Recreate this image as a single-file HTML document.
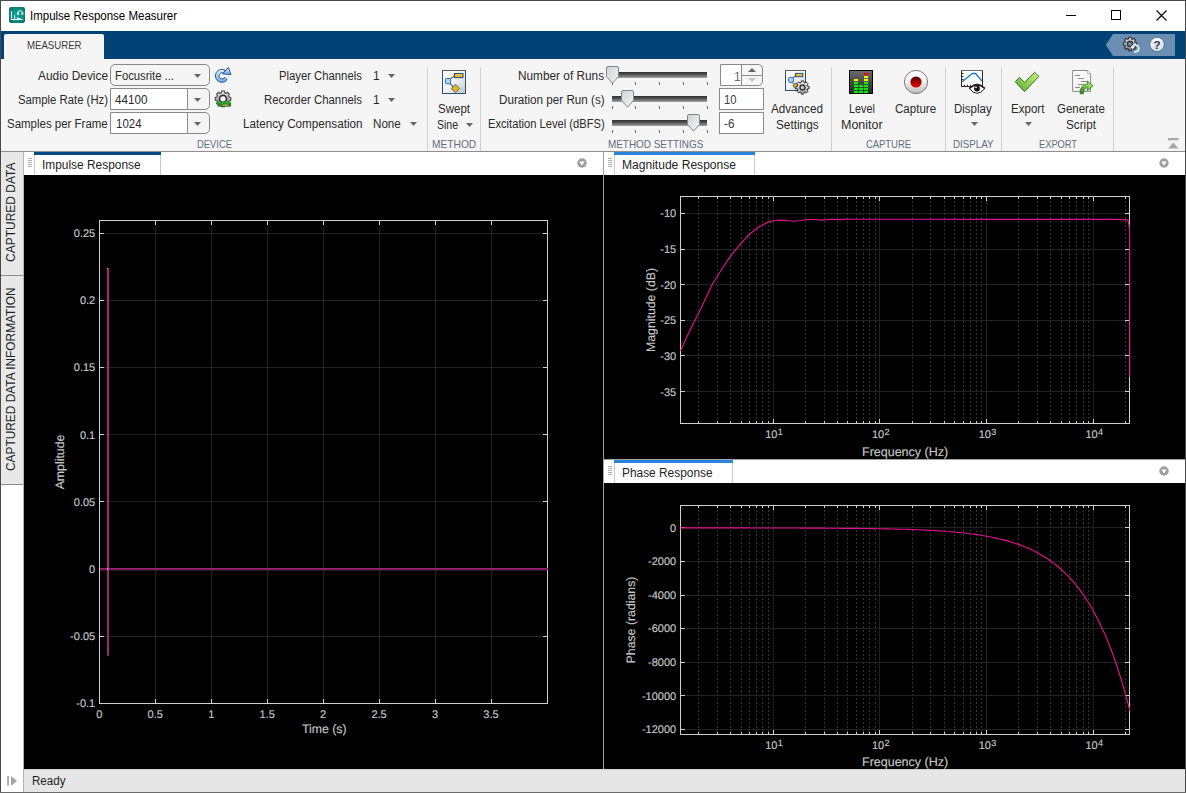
<!DOCTYPE html>
<html><head><meta charset="utf-8"><title>Impulse Response Measurer</title>
<style>
html,body{margin:0;padding:0;}
body{width:1186px;height:793px;position:relative;overflow:hidden;background:#fff;font-family:"Liberation Sans",sans-serif;}
.t{position:absolute;white-space:nowrap;line-height:1.117;transform-origin:0 0;display:block;}
svg{position:absolute;overflow:visible;}
</style></head><body>
<div style="position:absolute;left:0px;top:0px;width:1186px;height:793px;background:#fff;"></div>
<div style="position:absolute;left:0px;top:0px;width:1186px;height:1px;background:#4a4a4a;"></div>
<svg style="left:9px;top:7px" width="16" height="16" viewBox="0 0 16 16"><defs><radialGradient id="ig" cx="0.5" cy="0.5" r="0.75"><stop offset="0" stop-color="#0fa898"/><stop offset="0.6" stop-color="#0a8a7c"/><stop offset="1" stop-color="#04524c"/></radialGradient></defs><rect x="0" y="0" width="16" height="16" rx="2.2" fill="url(#ig)"/><path d="M2.5 4V12.5H14" fill="none" stroke="#f0fffb" stroke-width="1.1"/><path d="M5.6 8.2V12.5" stroke="#e0fff8" stroke-width="1"/><path d="M8 10.3L13.8 12.6H8Z" fill="#f0fffb"/><path d="M9 6.8V6A2.2 2.5 0 0 1 13.4 6V6.8" fill="none" stroke="#f0fffb" stroke-width="0.9"/><rect x="8.2" y="5.4" width="1.5" height="2.6" fill="#f0fffb"/><rect x="12.7" y="5.4" width="1.5" height="2.6" fill="#f0fffb"/></svg>
<span class="t " style="left:30.00px;top:10.14px;font-size:12px;color:#000;transform:scaleX(0.9583);">Impulse Response Measurer</span>
<div style="position:absolute;left:1066px;top:15px;width:10px;height:1px;background:#000;"></div>
<div style="position:absolute;left:1111px;top:10px;width:8px;height:8px;border:1px solid #000"></div>
<svg style="left:1156px;top:10px" width="11" height="11" viewBox="0 0 11 11"><path d="M0.5 0.5L10.5 10.5M10.5 0.5L0.5 10.5" stroke="#000" stroke-width="1.1" fill="none"/></svg>
<div style="position:absolute;left:1px;top:31px;width:1184px;height:28px;background:#004275;"></div>
<div style="position:absolute;left:4px;top:34px;width:100px;height:25px;background:#f5f5f5;border-radius:2px 2px 0 0"></div>
<span class="t " style="left:27.00px;top:39.05px;font-size:11px;color:#3a3a3a;transform:scaleX(0.8742);">MEASURER</span>
<svg style="left:1105px;top:34px" width="71" height="22" viewBox="0 0 71 22"><path d="M0.8 11L8 0H70V22H8Z" fill="#6a8fb2"/></svg>
<div style="position:absolute;left:1px;top:59px;width:1184px;height:92px;background:#f5f5f5;"></div>
<div style="position:absolute;left:1px;top:151px;width:1184px;height:1px;background:#8e8e8e;"></div>
<div style="position:absolute;left:427px;top:67px;width:1px;height:84px;background:#cfcfcf;"></div>
<div style="position:absolute;left:480px;top:67px;width:1px;height:84px;background:#cfcfcf;"></div>
<div style="position:absolute;left:831px;top:67px;width:1px;height:84px;background:#cfcfcf;"></div>
<div style="position:absolute;left:945px;top:67px;width:1px;height:84px;background:#cfcfcf;"></div>
<div style="position:absolute;left:1001px;top:67px;width:1px;height:84px;background:#cfcfcf;"></div>
<div style="position:absolute;left:1113px;top:67px;width:1px;height:84px;background:#cfcfcf;"></div>
<span class="t " style="left:38.00px;top:69.84px;font-size:12px;color:#2a2a2a;transform:scaleX(0.9901);">Audio Device</span>
<span class="t " style="left:17.70px;top:93.84px;font-size:12px;color:#2a2a2a;transform:scaleX(0.9438);">Sample Rate (Hz)</span>
<span class="t " style="left:7.30px;top:117.84px;font-size:12px;color:#2a2a2a;transform:scaleX(0.9557);">Samples per Frame</span>
<div style="position:absolute;left:110px;top:64px;width:98px;height:20px;border:1px solid #8a8a8a;border-radius:5px;background:#f5f5f5"></div>
<div style="position:absolute;left:110px;top:88px;width:98px;height:20px;border:1px solid #8a8a8a;border-radius:0 5px 5px 0;background:#f5f5f5"><div style="position:absolute;left:0;top:0;width:75.5px;height:20px;background:#fff;border-right:1px solid #8a8a8a"></div></div>
<div style="position:absolute;left:110px;top:112px;width:98px;height:20px;border:1px solid #8a8a8a;border-radius:0 5px 5px 0;background:#f5f5f5"><div style="position:absolute;left:0;top:0;width:75.5px;height:20px;background:#fff;border-right:1px solid #8a8a8a"></div></div>
<svg style="left:193.5px;top:74.3px" width="7" height="4" viewBox="0 0 7 4"><path d="M0 0H7L3.5 4Z" fill="#666"/></svg>
<svg style="left:193.5px;top:98.3px" width="7" height="4" viewBox="0 0 7 4"><path d="M0 0H7L3.5 4Z" fill="#666"/></svg>
<svg style="left:193.5px;top:122.3px" width="7" height="4" viewBox="0 0 7 4"><path d="M0 0H7L3.5 4Z" fill="#666"/></svg>
<span class="t " style="left:115.00px;top:69.84px;font-size:12px;color:#2a2a2a;transform:scaleX(0.9412);">Focusrite ...</span>
<span class="t " style="left:115.00px;top:93.84px;font-size:12px;color:#2a2a2a;transform:scaleX(0.9740);">44100</span>
<span class="t " style="left:115.50px;top:117.84px;font-size:12px;color:#2a2a2a;transform:scaleX(0.9553);">1024</span>
<span class="t " style="left:196.80px;top:138.04px;font-size:11px;color:#5f6e7c;transform:scaleX(0.8546);">DEVICE</span>
<span class="t " style="left:279.30px;top:69.84px;font-size:12px;color:#2a2a2a;transform:scaleX(0.9404);">Player Channels</span>
<span class="t " style="left:264.10px;top:93.84px;font-size:12px;color:#2a2a2a;transform:scaleX(0.9479);">Recorder Channels</span>
<span class="t " style="left:242.60px;top:117.84px;font-size:12px;color:#2a2a2a;transform:scaleX(0.9736);">Latency Compensation</span>
<span class="t " style="left:373.00px;top:69.84px;font-size:12px;color:#2a2a2a;">1</span>
<svg style="left:387.5px;top:74.3px" width="7" height="4" viewBox="0 0 7 4"><path d="M0 0H7L3.5 4Z" fill="#666"/></svg>
<span class="t " style="left:373.00px;top:93.84px;font-size:12px;color:#2a2a2a;">1</span>
<svg style="left:387.5px;top:98.3px" width="7" height="4" viewBox="0 0 7 4"><path d="M0 0H7L3.5 4Z" fill="#666"/></svg>
<span class="t " style="left:373.30px;top:117.84px;font-size:12px;color:#2a2a2a;transform:scaleX(0.9691);">None</span>
<svg style="left:409.5px;top:122.3px" width="7" height="4" viewBox="0 0 7 4"><path d="M0 0H7L3.5 4Z" fill="#666"/></svg>
<span class="t " style="left:437.80px;top:102.64px;font-size:12px;color:#2a2a2a;transform:scaleX(0.9595);">Swept</span>
<span class="t " style="left:436.90px;top:118.54px;font-size:12px;color:#2a2a2a;transform:scaleX(0.8785);">Sine</span>
<svg style="left:465.5px;top:123.4px" width="7" height="4" viewBox="0 0 7 4"><path d="M0 0H7L3.5 4Z" fill="#666"/></svg>
<span class="t " style="left:431.80px;top:138.04px;font-size:11px;color:#5f6e7c;transform:scaleX(0.9274);">METHOD</span>
<span class="t " style="left:518.20px;top:69.84px;font-size:12px;color:#2a2a2a;transform:scaleX(0.9855);">Number of Runs</span>
<span class="t " style="left:498.70px;top:93.84px;font-size:12px;color:#2a2a2a;transform:scaleX(0.9714);">Duration per Run (s)</span>
<span class="t " style="left:487.60px;top:117.84px;font-size:12px;color:#2a2a2a;transform:scaleX(0.9307);">Excitation Level (dBFS)</span>
<div style="position:absolute;left:612px;top:71.5px;width:95.3px;height:6.5px;background:linear-gradient(#2e2e2e,#555 45%,#a5a5a5)"></div>
<div style="position:absolute;left:612px;top:81.8px;width:1px;height:3.3px;background:#6a6a6a;"></div>
<div style="position:absolute;left:635px;top:81.8px;width:1px;height:3.3px;background:#6a6a6a;"></div>
<div style="position:absolute;left:659px;top:81.8px;width:1px;height:3.3px;background:#6a6a6a;"></div>
<div style="position:absolute;left:683px;top:81.8px;width:1px;height:3.3px;background:#6a6a6a;"></div>
<div style="position:absolute;left:707px;top:81.8px;width:1px;height:3.3px;background:#6a6a6a;"></div>
<svg style="left:606px;top:66.0px" width="13" height="18" viewBox="0 0 13 18"><defs><linearGradient id="tg71" x1="0" y1="0" x2="1" y2="1"><stop offset="0" stop-color="#cfd3d6"/><stop offset="1" stop-color="#f4f4f4"/></linearGradient></defs><path d="M2 0.5H11Q12.5 0.5 12.5 2V10.5L6.5 17.2L0.5 10.5V2Q0.5 0.5 2 0.5Z" fill="url(#tg71)" stroke="#7d8790" stroke-width="1"/></svg>
<div style="position:absolute;left:612px;top:95.5px;width:95.3px;height:6.5px;background:linear-gradient(#2e2e2e,#555 45%,#a5a5a5)"></div>
<div style="position:absolute;left:612px;top:105.8px;width:1px;height:3.3px;background:#6a6a6a;"></div>
<div style="position:absolute;left:635px;top:105.8px;width:1px;height:3.3px;background:#6a6a6a;"></div>
<div style="position:absolute;left:659px;top:105.8px;width:1px;height:3.3px;background:#6a6a6a;"></div>
<div style="position:absolute;left:683px;top:105.8px;width:1px;height:3.3px;background:#6a6a6a;"></div>
<div style="position:absolute;left:707px;top:105.8px;width:1px;height:3.3px;background:#6a6a6a;"></div>
<svg style="left:621px;top:90.0px" width="13" height="18" viewBox="0 0 13 18"><defs><linearGradient id="tg95" x1="0" y1="0" x2="1" y2="1"><stop offset="0" stop-color="#cfd3d6"/><stop offset="1" stop-color="#f4f4f4"/></linearGradient></defs><path d="M2 0.5H11Q12.5 0.5 12.5 2V10.5L6.5 17.2L0.5 10.5V2Q0.5 0.5 2 0.5Z" fill="url(#tg95)" stroke="#7d8790" stroke-width="1"/></svg>
<div style="position:absolute;left:612px;top:119.7px;width:95.3px;height:6.5px;background:linear-gradient(#2e2e2e,#555 45%,#a5a5a5)"></div>
<div style="position:absolute;left:612px;top:130.0px;width:1px;height:3.3px;background:#6a6a6a;"></div>
<div style="position:absolute;left:635px;top:130.0px;width:1px;height:3.3px;background:#6a6a6a;"></div>
<div style="position:absolute;left:659px;top:130.0px;width:1px;height:3.3px;background:#6a6a6a;"></div>
<div style="position:absolute;left:683px;top:130.0px;width:1px;height:3.3px;background:#6a6a6a;"></div>
<div style="position:absolute;left:707px;top:130.0px;width:1px;height:3.3px;background:#6a6a6a;"></div>
<svg style="left:687.3px;top:114.2px" width="13" height="18" viewBox="0 0 13 18"><defs><linearGradient id="tg119" x1="0" y1="0" x2="1" y2="1"><stop offset="0" stop-color="#cfd3d6"/><stop offset="1" stop-color="#f4f4f4"/></linearGradient></defs><path d="M2 0.5H11Q12.5 0.5 12.5 2V10.5L6.5 17.2L0.5 10.5V2Q0.5 0.5 2 0.5Z" fill="url(#tg119)" stroke="#7d8790" stroke-width="1"/></svg>
<div style="position:absolute;left:720px;top:64px;width:41px;height:20px;border:1px solid #8a8a8a;border-radius:0 5px 5px 0;background:#f5f5f5"><div style="position:absolute;left:0;top:0;width:20px;height:20px;background:#fff;border-right:1px solid #8a8a8a"></div><div style="position:absolute;left:21px;top:10px;width:20px;height:1px;background:#8a8a8a"></div></div>
<svg style="left:748px;top:68.3px" width="8" height="4" viewBox="0 0 8 4"><path d="M0 4H8L4 0Z" fill="#666"/></svg>
<svg style="left:748px;top:77.8px" width="8" height="4" viewBox="0 0 8 4"><path d="M0 0H8L4 4Z" fill="#c4c4c4"/></svg>
<span class="t " style="left:734.00px;top:71.14px;font-size:12px;color:#6a6a6a;">1</span>
<div style="position:absolute;left:719px;top:88px;width:43px;height:20px;border:1px solid #8a8a8a;background:#fff"></div>
<div style="position:absolute;left:719px;top:112px;width:43px;height:20px;border:1px solid #8a8a8a;background:#fff"></div>
<span class="t " style="left:724.00px;top:93.84px;font-size:12px;color:#3a3a3a;transform:scaleX(0.9365);">10</span>
<span class="t " style="left:724.00px;top:117.84px;font-size:12px;color:#3a3a3a;transform:scaleX(0.9747);">-6</span>
<span class="t " style="left:770.80px;top:102.64px;font-size:12px;color:#2a2a2a;transform:scaleX(0.9724);">Advanced</span>
<span class="t " style="left:775.60px;top:118.54px;font-size:12px;color:#2a2a2a;transform:scaleX(0.9825);">Settings</span>
<span class="t " style="left:608.20px;top:138.04px;font-size:11px;color:#5f6e7c;transform:scaleX(0.9014);">METHOD SETTINGS</span>
<span class="t " style="left:848.70px;top:102.64px;font-size:12px;color:#2a2a2a;transform:scaleX(0.8994);">Level</span>
<span class="t " style="left:840.80px;top:118.54px;font-size:12px;color:#2a2a2a;transform:scaleX(1.0421);">Monitor</span>
<span class="t " style="left:895.10px;top:102.64px;font-size:12px;color:#2a2a2a;transform:scaleX(0.9627);">Capture</span>
<span class="t " style="left:866.00px;top:138.04px;font-size:11px;color:#5f6e7c;transform:scaleX(0.8561);">CAPTURE</span>
<span class="t " style="left:954.20px;top:102.64px;font-size:12px;color:#2a2a2a;transform:scaleX(0.9582);">Display</span>
<svg style="left:970.5px;top:122.3px" width="7" height="4" viewBox="0 0 7 4"><path d="M0 0H7L3.5 4Z" fill="#666"/></svg>
<span class="t " style="left:953.30px;top:138.04px;font-size:11px;color:#5f6e7c;transform:scaleX(0.8872);">DISPLAY</span>
<span class="t " style="left:1010.60px;top:102.64px;font-size:12px;color:#2a2a2a;transform:scaleX(0.9630);">Export</span>
<svg style="left:1024.5px;top:122.3px" width="7" height="4" viewBox="0 0 7 4"><path d="M0 0H7L3.5 4Z" fill="#666"/></svg>
<span class="t " style="left:1057.20px;top:102.64px;font-size:12px;color:#2a2a2a;transform:scaleX(0.9554);">Generate</span>
<span class="t " style="left:1066.00px;top:118.54px;font-size:12px;color:#2a2a2a;transform:scaleX(0.9780);">Script</span>
<span class="t " style="left:1038.70px;top:138.04px;font-size:11px;color:#5f6e7c;transform:scaleX(0.8438);">EXPORT</span>
<svg style="left:1168px;top:137.5px" width="11" height="11" viewBox="0 0 11 11"><path d="M0 0H10.5V2.2H0ZM0 10.5H10.5L5.25 4.5Z" fill="#a8a8a8"/></svg>
<svg style="left:0;top:0" width="1186" height="160" viewBox="0 0 1186 160"><defs>
<linearGradient id="gBlue" x1="0" y1="0" x2="0" y2="1"><stop offset="0" stop-color="#e4f0fb"/><stop offset="1" stop-color="#6fa6dc"/></linearGradient>
<linearGradient id="gGear2" x1="0" y1="0" x2="0" y2="1"><stop offset="0" stop-color="#e8e8e8"/><stop offset="1" stop-color="#8c8c8c"/></linearGradient>
<linearGradient id="gGear" x1="0" y1="0" x2="0" y2="1"><stop offset="0" stop-color="#fafafa"/><stop offset="1" stop-color="#a8a8a8"/></linearGradient>
<linearGradient id="gBox" x1="0" y1="0" x2="1" y2="1"><stop offset="0" stop-color="#ffffff"/><stop offset="0.5" stop-color="#f2f2f2"/><stop offset="1" stop-color="#c4c4c4"/></linearGradient>
<linearGradient id="gYel" x1="0" y1="0" x2="0" y2="1"><stop offset="0" stop-color="#f7d040"/><stop offset="1" stop-color="#e8a010"/></linearGradient>
<linearGradient id="gLM" x1="0" y1="0" x2="0" y2="1"><stop offset="0" stop-color="#6c6c6c"/><stop offset="1" stop-color="#272727"/></linearGradient>
<linearGradient id="gCap" x1="0" y1="0" x2="0" y2="1"><stop offset="0" stop-color="#ffffff"/><stop offset="0.45" stop-color="#f4f4f4"/><stop offset="1" stop-color="#bcbcbc"/></linearGradient>
<linearGradient id="gRed" x1="0" y1="0" x2="0" y2="1"><stop offset="0" stop-color="#560000"/><stop offset="1" stop-color="#e80404"/></linearGradient>
<linearGradient id="gChk" x1="0" y1="1" x2="1" y2="0"><stop offset="0" stop-color="#58a838"/><stop offset="0.6" stop-color="#9cd858"/><stop offset="1" stop-color="#c8f090"/></linearGradient>
<linearGradient id="gArr" x1="0" y1="1" x2="1" y2="0"><stop offset="0" stop-color="#1f7a1f"/><stop offset="0.6" stop-color="#8fd050"/><stop offset="1" stop-color="#c0ec80"/></linearGradient>
<linearGradient id="gHelp" x1="0" y1="0" x2="0" y2="1"><stop offset="0" stop-color="#ffffff"/><stop offset="1" stop-color="#cfd8e2"/></linearGradient>
<linearGradient id="gPage" x1="0" y1="0" x2="1" y2="1"><stop offset="0" stop-color="#ffffff"/><stop offset="1" stop-color="#ececec"/></linearGradient>
</defs><path d="M225.10 70.20A6.5 6.5 0 1 0 227.10 79.70L224.80 77.40A3.1 3.1 0 1 1 223.50 73.10Z" fill="url(#gBlue)" stroke="#2a5a9c" stroke-width="1"/><path d="M228.3 67.3L231 74.6L222.6 73.9Z" fill="url(#gBlue)" stroke="#2a5a9c" stroke-width="1" stroke-linejoin="round"/><path d="M229.06 97.09 L230.78 97.42 L230.78 100.18 L229.06 100.51 L228.50 101.88 L229.48 103.32 L227.52 105.28 L226.08 104.30 L224.71 104.86 L224.38 106.58 L221.62 106.58 L221.29 104.86 L219.92 104.30 L218.48 105.28 L216.52 103.32 L217.50 101.88 L216.94 100.51 L215.22 100.18 L215.22 97.42 L216.94 97.09 L217.50 95.72 L216.52 94.28 L218.48 92.32 L219.92 93.30 L221.29 92.74 L221.62 91.02 L224.38 91.02 L224.71 92.74 L226.08 93.30 L227.52 92.32 L229.48 94.28 L228.50 95.72Z" fill="url(#gGear2)" stroke="#484848" stroke-width="1.1"/><circle cx="223" cy="98.8" r="3.5" fill="#fdfdfd" stroke="#333" stroke-width="1.7"/><rect x="217.6" y="101.8" width="13.4" height="5" rx="1" fill="#2e7d32"/><rect x="217.6" y="101.8" width="13.4" height="1.6" rx="0.5" fill="#1fb01f"/><rect x="222.6" y="104.3" width="5.4" height="1.5" fill="#b8a040"/><rect x="442.5" y="70.5" width="23" height="23" fill="url(#gBox)" stroke="#2f4f72" stroke-width="1"/><path d="M442 70.5H466" stroke="#5a5a5a" stroke-width="1"/><path d="M449.5 79.5L455 75.5M449.5 83L454 87.5" stroke="#6a6a6a" stroke-width="1.1" fill="none"/><rect x="454.5" y="73.5" width="8.5" height="4.2" fill="url(#gYel)" stroke="#1f4f86" stroke-width="1"/><rect x="445.4" y="78.5" width="5.2" height="5.2" rx="1.3" fill="#b4d6f6" stroke="#2a6ab4" stroke-width="1"/><path d="M455.5 84.3L459.7 88.5L455.5 92.7L451.3 88.5Z" fill="#f0b020" stroke="#2a6a7a" stroke-width="0.9"/><rect x="785.5" y="70.5" width="20" height="20" fill="url(#gBox)" stroke="#2f4f72" stroke-width="1"/><path d="M785 70.5H806" stroke="#5a5a5a" stroke-width="1"/><path d="M792 78.5L796 75.5M792.5 82.5L796 86" stroke="#6a6a6a" stroke-width="1.1" fill="none"/><rect x="795.5" y="73.4" width="7.3" height="3.3" fill="url(#gYel)" stroke="#1f4f86" stroke-width="1"/><circle cx="791.1" cy="79.9" r="2.7" fill="#b4d6f6" stroke="#2a6ab4" stroke-width="1"/><path d="M796 82.8L799.2 86L796 89.2L792.8 86Z" fill="#f0b020" stroke="#2a6a7a" stroke-width="0.9"/><path d="M807.41 86.12 L809.10 86.33 L809.10 88.67 L807.41 88.88 L806.95 89.99 L807.99 91.34 L806.34 92.99 L804.99 91.95 L803.88 92.41 L803.67 94.10 L801.33 94.10 L801.12 92.41 L800.01 91.95 L798.66 92.99 L797.01 91.34 L798.05 89.99 L797.59 88.88 L795.90 88.67 L795.90 86.33 L797.59 86.12 L798.05 85.01 L797.01 83.66 L798.66 82.01 L800.01 83.05 L801.12 82.59 L801.33 80.90 L803.67 80.90 L803.88 82.59 L804.99 83.05 L806.34 82.01 L807.99 83.66 L806.95 85.01Z" fill="url(#gGear)" stroke="#2e2e2e" stroke-width="1"/><circle cx="802.5" cy="87.5" r="2.5" fill="#c4c4c4" stroke="#2e2e2e" stroke-width="1.3"/><rect x="848.5" y="69.5" width="25" height="25" fill="none" stroke="#ffffff" stroke-width="1" opacity="0.9"/><rect x="849.5" y="70.5" width="23" height="23" fill="url(#gLM)" stroke="#000" stroke-width="1"/><rect x="854" y="82" width="4.1" height="2.1" fill="#00ee00"/><rect x="864" y="82" width="4.1" height="2.1" fill="#00ee00"/><rect x="854" y="85" width="4.1" height="2.1" fill="#00ee00"/><rect x="864" y="85" width="4.1" height="2.1" fill="#00ee00"/><rect x="854" y="88" width="4.1" height="2.1" fill="#00ee00"/><rect x="864" y="88" width="4.1" height="2.1" fill="#00ee00"/><rect x="854" y="91" width="4.1" height="2.1" fill="#00ee00"/><rect x="864" y="91" width="4.1" height="2.1" fill="#00ee00"/><rect x="859" y="85" width="4.1" height="2.1" fill="#00ee00"/><rect x="859" y="88" width="4.1" height="2.1" fill="#00ee00"/><rect x="859" y="91" width="4.1" height="2.1" fill="#00ee00"/><rect x="854" y="79" width="4.1" height="2.1" fill="#f8f800"/><rect x="864" y="79" width="4.1" height="2.1" fill="#f8f800"/><rect x="864" y="76" width="4.1" height="2.1" fill="#f8f800"/><rect x="864" y="73" width="4.1" height="2.1" fill="#f80000"/><circle cx="916" cy="82" r="11.6" fill="url(#gCap)" stroke="#7c7c7c" stroke-width="1"/><circle cx="916" cy="82" r="5.6" fill="url(#gRed)"/><rect x="961.5" y="70.5" width="21" height="16" fill="#fff" stroke="#2a2a2a" stroke-width="1"/><path d="M961 70.5H983" stroke="#6a6a6a" stroke-width="1"/><path d="M962 73.5H963.5M962 76.5H963.5M962 79.5H963.5M964.5 86V84.7M967.5 86V84.7M970.5 86V84.7" stroke="#2a2a2a" stroke-width="1"/><path d="M962.2 81.8L972.3 73.5H975.6L982 81.2" fill="none" stroke="#1478c8" stroke-width="1.3" stroke-linejoin="round"/><path d="M969.3 88.6Q977 79.5 984.8 88.6Q977 98 969.3 88.6Z" fill="#fff" stroke="#1e1e1e" stroke-width="1"/><path d="M969.3 88.4Q977 81.5 984.8 88.4" fill="none" stroke="#1e1e1e" stroke-width="1.6"/><circle cx="977" cy="88.5" r="2.9" fill="#111"/><circle cx="976" cy="87.3" r="0.9" fill="#fff"/><path d="M1015.2 81.7L1019.5 77.3L1024.5 82.3L1034.7 72.3L1038.9 76.4L1024.5 91.7Z" fill="url(#gChk)" stroke="#2f6a20" stroke-width="0.9" stroke-linejoin="round"/><path d="M1072.6 70.5H1087.5L1090.6 73.6V91.4H1072.6Z" fill="url(#gPage)" stroke="#8a8a8a" stroke-width="1"/><path d="M1087.5 70.5V73.6H1090.6" fill="#f4f4f4" stroke="#a8a8a8" stroke-width="0.8"/><path d="M1075 75.5H1080M1078 78.5H1084M1081 81.5H1087M1078 84.5H1084M1075 87.5H1080" stroke="#8e8e8e" stroke-width="1"/><path d="M1080 93.8C1080 87.5 1083 84.3 1087.4 84.2V81L1093 85.8L1087.4 90.5V87.6C1084.8 87.8 1083.6 90 1083.5 93.8Z" fill="url(#gArr)" stroke="#2c7a22" stroke-width="0.8" stroke-linejoin="round"/><path d="M1135.00 42.49 L1136.70 42.71 L1136.70 45.09 L1135.00 45.31 L1134.54 46.44 L1135.58 47.79 L1133.89 49.48 L1132.54 48.44 L1131.41 48.90 L1131.19 50.60 L1128.81 50.60 L1128.59 48.90 L1127.46 48.44 L1126.11 49.48 L1124.42 47.79 L1125.46 46.44 L1125.00 45.31 L1123.30 45.09 L1123.30 42.71 L1125.00 42.49 L1125.46 41.36 L1124.42 40.01 L1126.11 38.32 L1127.46 39.36 L1128.59 38.90 L1128.81 37.20 L1131.19 37.20 L1131.41 38.90 L1132.54 39.36 L1133.89 38.32 L1135.58 40.01 L1134.54 41.36Z" fill="url(#gGear2)" stroke="#333" stroke-width="1.1"/><circle cx="1130" cy="43.9" r="2.6" fill="#6a8fb2" stroke="#333" stroke-width="1.4"/><path d="M1132.2 47.2A3.4 3.4 0 1 1 1134.2 51.6" fill="none" stroke="#e8f2fc" stroke-width="1.8"/><path d="M1130.6 46.2L1134.8 46.2L1132.6 49.5Z" fill="#e8f2fc"/><circle cx="1157" cy="44.5" r="7.2" fill="url(#gHelp)" stroke="#44688e" stroke-width="0.8"/><text x="1157" y="48.6" text-anchor="middle" font-size="11.5" font-weight="bold" fill="#1f2d52" font-family="Liberation Sans, sans-serif">?</text></svg>
<div style="position:absolute;left:1px;top:152px;width:22px;height:640px;background:#fff;"></div>
<div style="position:absolute;left:1px;top:152px;width:22px;height:332px;background:#e8e8e8;"></div>
<div style="position:absolute;left:23px;top:152px;width:1px;height:640px;background:#b4b4b4;"></div>
<div style="position:absolute;left:1px;top:275px;width:22px;height:1px;background:#8c8c8c;"></div>
<div style="position:absolute;left:1px;top:484px;width:22px;height:1px;background:#8c8c8c;"></div>
<span class="t" style="left:11.2px;top:262.3px;font-size:12px;color:#1e1e1e;line-height:0;transform:rotate(-90deg) scaleX(0.9994);">CAPTURED DATA</span>
<span class="t" style="left:11.2px;top:471.3px;font-size:12px;color:#1e1e1e;line-height:0;transform:rotate(-90deg) scaleX(0.9901);">CAPTURED DATA INFORMATION</span>
<div style="position:absolute;left:24px;top:152px;width:579px;height:23px;background:#fff;"></div>
<div style="position:absolute;left:24px;top:175px;width:579px;height:594px;background:#000;"></div>
<div style="position:absolute;left:27.5px;top:158px;width:4px;height:1px;background:#b0b0b0;"></div>
<div style="position:absolute;left:27.5px;top:160px;width:4px;height:1px;background:#b0b0b0;"></div>
<div style="position:absolute;left:27.5px;top:162px;width:4px;height:1px;background:#b0b0b0;"></div>
<div style="position:absolute;left:27.5px;top:164px;width:4px;height:1px;background:#b0b0b0;"></div>
<div style="position:absolute;left:27.5px;top:166px;width:4px;height:1px;background:#b0b0b0;"></div>
<div style="position:absolute;left:34px;top:152px;width:127px;height:23px;background:#fff;border-left:1px solid #c8c8c8;border-right:1px solid #c8c8c8;box-sizing:border-box"></div>
<div style="position:absolute;left:34px;top:152px;width:127px;height:3px;background:#004b87;"></div>
<span class="t " style="left:42.10px;top:158.74px;font-size:12px;color:#1e1e1e;transform:scaleX(0.9921);">Impulse Response</span>
<svg style="left:576.5px;top:158px" width="10" height="10" viewBox="0 0 10 10"><circle cx="5" cy="5" r="4.7" fill="#9e9e9e"/><path d="M2.3 3.4H7.7L5 7.6Z" fill="#fff"/></svg>
<div style="position:absolute;left:603px;top:152px;width:1px;height:617px;background:#a0a0a0;"></div>
<div style="position:absolute;left:604px;top:152px;width:581px;height:23px;background:#fff;"></div>
<div style="position:absolute;left:604px;top:175px;width:581px;height:284px;background:#000;"></div>
<div style="position:absolute;left:607.5px;top:158px;width:4px;height:1px;background:#b0b0b0;"></div>
<div style="position:absolute;left:607.5px;top:160px;width:4px;height:1px;background:#b0b0b0;"></div>
<div style="position:absolute;left:607.5px;top:162px;width:4px;height:1px;background:#b0b0b0;"></div>
<div style="position:absolute;left:607.5px;top:164px;width:4px;height:1px;background:#b0b0b0;"></div>
<div style="position:absolute;left:607.5px;top:166px;width:4px;height:1px;background:#b0b0b0;"></div>
<div style="position:absolute;left:614px;top:152px;width:141px;height:23px;background:#fff;border-left:1px solid #c8c8c8;border-right:1px solid #c8c8c8;box-sizing:border-box"></div>
<div style="position:absolute;left:614px;top:152px;width:141px;height:3px;background:#2a84dc;"></div>
<span class="t " style="left:622.10px;top:158.74px;font-size:12px;color:#1e1e1e;transform:scaleX(1.0052);">Magnitude Response</span>
<svg style="left:1158.5px;top:158px" width="10" height="10" viewBox="0 0 10 10"><circle cx="5" cy="5" r="4.7" fill="#9e9e9e"/><path d="M2.3 3.4H7.7L5 7.6Z" fill="#fff"/></svg>
<div style="position:absolute;left:604px;top:459px;width:581px;height:1px;background:#a0a0a0;"></div>
<div style="position:absolute;left:604px;top:460px;width:581px;height:23px;background:#fff;"></div>
<div style="position:absolute;left:604px;top:483px;width:581px;height:286px;background:#000;"></div>
<div style="position:absolute;left:607.5px;top:466px;width:4px;height:1px;background:#b0b0b0;"></div>
<div style="position:absolute;left:607.5px;top:468px;width:4px;height:1px;background:#b0b0b0;"></div>
<div style="position:absolute;left:607.5px;top:470px;width:4px;height:1px;background:#b0b0b0;"></div>
<div style="position:absolute;left:607.5px;top:472px;width:4px;height:1px;background:#b0b0b0;"></div>
<div style="position:absolute;left:607.5px;top:474px;width:4px;height:1px;background:#b0b0b0;"></div>
<div style="position:absolute;left:614px;top:460px;width:119px;height:23px;background:#fff;border-left:1px solid #c8c8c8;border-right:1px solid #c8c8c8;box-sizing:border-box"></div>
<div style="position:absolute;left:614px;top:460px;width:119px;height:3px;background:#2a84dc;"></div>
<span class="t " style="left:622.10px;top:466.74px;font-size:12px;color:#1e1e1e;transform:scaleX(0.9913);">Phase Response</span>
<svg style="left:1158.5px;top:466px" width="10" height="10" viewBox="0 0 10 10"><circle cx="5" cy="5" r="4.7" fill="#9e9e9e"/><path d="M2.3 3.4H7.7L5 7.6Z" fill="#fff"/></svg>
<div style="position:absolute;left:24px;top:769px;width:1161px;height:23px;background:#e6e6e6;"></div>
<div style="position:absolute;left:24px;top:769px;width:1161px;height:1px;background:#d4d4d4;"></div>
<span class="t " style="left:31.50px;top:774.64px;font-size:12px;color:#1e1e1e;transform:scaleX(0.9658);">Ready</span>
<svg style="left:7px;top:776px" width="11" height="10" viewBox="0 0 11 10"><path d="M0.2 0H1.9V9.8H0.2Z" fill="#a4a4a4"/><path d="M4 0L10 4.9L4 9.8Z" fill="#a4a4a4"/></svg>
<svg style="left:0;top:0" width="1186" height="793" viewBox="0 0 1186 793" font-family="Liberation Sans, sans-serif" fill="#c6c6c6" stroke="#c6c6c6" stroke-width="0.15" text-rendering="geometricPrecision"><g shape-rendering="crispEdges"><line x1="155.45" y1="220.50" x2="155.45" y2="703.50" stroke="#222222" stroke-width="1" /><line x1="211.40" y1="220.50" x2="211.40" y2="703.50" stroke="#222222" stroke-width="1" /><line x1="267.35" y1="220.50" x2="267.35" y2="703.50" stroke="#222222" stroke-width="1" /><line x1="323.30" y1="220.50" x2="323.30" y2="703.50" stroke="#222222" stroke-width="1" /><line x1="379.25" y1="220.50" x2="379.25" y2="703.50" stroke="#222222" stroke-width="1" /><line x1="435.20" y1="220.50" x2="435.20" y2="703.50" stroke="#222222" stroke-width="1" /><line x1="491.15" y1="220.50" x2="491.15" y2="703.50" stroke="#222222" stroke-width="1" /><line x1="99.50" y1="233.10" x2="547.50" y2="233.10" stroke="#222222" stroke-width="1" /><line x1="99.50" y1="300.30" x2="547.50" y2="300.30" stroke="#222222" stroke-width="1" /><line x1="99.50" y1="367.50" x2="547.50" y2="367.50" stroke="#222222" stroke-width="1" /><line x1="99.50" y1="434.70" x2="547.50" y2="434.70" stroke="#222222" stroke-width="1" /><line x1="99.50" y1="501.90" x2="547.50" y2="501.90" stroke="#222222" stroke-width="1" /><line x1="99.50" y1="569.10" x2="547.50" y2="569.10" stroke="#222222" stroke-width="1" /><line x1="99.50" y1="636.30" x2="547.50" y2="636.30" stroke="#222222" stroke-width="1" /></g><g shape-rendering="crispEdges"><line x1="155.45" y1="703.50" x2="155.45" y2="699.00" stroke="#cfcfcf" stroke-width="1" /><line x1="155.45" y1="220.50" x2="155.45" y2="225.00" stroke="#cfcfcf" stroke-width="1" /><line x1="211.40" y1="703.50" x2="211.40" y2="699.00" stroke="#cfcfcf" stroke-width="1" /><line x1="211.40" y1="220.50" x2="211.40" y2="225.00" stroke="#cfcfcf" stroke-width="1" /><line x1="267.35" y1="703.50" x2="267.35" y2="699.00" stroke="#cfcfcf" stroke-width="1" /><line x1="267.35" y1="220.50" x2="267.35" y2="225.00" stroke="#cfcfcf" stroke-width="1" /><line x1="323.30" y1="703.50" x2="323.30" y2="699.00" stroke="#cfcfcf" stroke-width="1" /><line x1="323.30" y1="220.50" x2="323.30" y2="225.00" stroke="#cfcfcf" stroke-width="1" /><line x1="379.25" y1="703.50" x2="379.25" y2="699.00" stroke="#cfcfcf" stroke-width="1" /><line x1="379.25" y1="220.50" x2="379.25" y2="225.00" stroke="#cfcfcf" stroke-width="1" /><line x1="435.20" y1="703.50" x2="435.20" y2="699.00" stroke="#cfcfcf" stroke-width="1" /><line x1="435.20" y1="220.50" x2="435.20" y2="225.00" stroke="#cfcfcf" stroke-width="1" /><line x1="491.15" y1="703.50" x2="491.15" y2="699.00" stroke="#cfcfcf" stroke-width="1" /><line x1="491.15" y1="220.50" x2="491.15" y2="225.00" stroke="#cfcfcf" stroke-width="1" /><line x1="99.50" y1="233.10" x2="104.00" y2="233.10" stroke="#cfcfcf" stroke-width="1" /><line x1="547.50" y1="233.10" x2="543.00" y2="233.10" stroke="#cfcfcf" stroke-width="1" /><line x1="99.50" y1="300.30" x2="104.00" y2="300.30" stroke="#cfcfcf" stroke-width="1" /><line x1="547.50" y1="300.30" x2="543.00" y2="300.30" stroke="#cfcfcf" stroke-width="1" /><line x1="99.50" y1="367.50" x2="104.00" y2="367.50" stroke="#cfcfcf" stroke-width="1" /><line x1="547.50" y1="367.50" x2="543.00" y2="367.50" stroke="#cfcfcf" stroke-width="1" /><line x1="99.50" y1="434.70" x2="104.00" y2="434.70" stroke="#cfcfcf" stroke-width="1" /><line x1="547.50" y1="434.70" x2="543.00" y2="434.70" stroke="#cfcfcf" stroke-width="1" /><line x1="99.50" y1="501.90" x2="104.00" y2="501.90" stroke="#cfcfcf" stroke-width="1" /><line x1="547.50" y1="501.90" x2="543.00" y2="501.90" stroke="#cfcfcf" stroke-width="1" /><line x1="99.50" y1="569.10" x2="104.00" y2="569.10" stroke="#cfcfcf" stroke-width="1" /><line x1="547.50" y1="569.10" x2="543.00" y2="569.10" stroke="#cfcfcf" stroke-width="1" /><line x1="99.50" y1="636.30" x2="104.00" y2="636.30" stroke="#cfcfcf" stroke-width="1" /><line x1="547.50" y1="636.30" x2="543.00" y2="636.30" stroke="#cfcfcf" stroke-width="1" /><rect x="99.5" y="220.5" width="448.0" height="483.0" fill="none" stroke="#cfcfcf" stroke-width="1"/></g><text x="99.30" y="718.10" text-anchor="middle" font-size="11" >0</text><text x="155.25" y="718.10" text-anchor="middle" font-size="11" >0.5</text><text x="211.20" y="718.10" text-anchor="middle" font-size="11" >1</text><text x="267.15" y="718.10" text-anchor="middle" font-size="11" >1.5</text><text x="323.10" y="718.10" text-anchor="middle" font-size="11" >2</text><text x="379.05" y="718.10" text-anchor="middle" font-size="11" >2.5</text><text x="435.00" y="718.10" text-anchor="middle" font-size="11" >3</text><text x="490.95" y="718.10" text-anchor="middle" font-size="11" >3.5</text><text x="95.20" y="237.00" text-anchor="end" font-size="11" >0.25</text><text x="95.20" y="304.20" text-anchor="end" font-size="11" >0.2</text><text x="95.20" y="371.40" text-anchor="end" font-size="11" >0.15</text><text x="95.20" y="438.60" text-anchor="end" font-size="11" >0.1</text><text x="95.20" y="505.80" text-anchor="end" font-size="11" >0.05</text><text x="95.20" y="573.00" text-anchor="end" font-size="11" >0</text><text x="95.20" y="640.20" text-anchor="end" font-size="11" >-0.05</text><text x="95.20" y="707.40" text-anchor="end" font-size="11" >-0.1</text><text x="324.30" y="733.10" text-anchor="middle" font-size="12.3" >Time (s)</text><text transform="translate(64,462.0) rotate(-90)" text-anchor="middle" font-size="12.3">Amplitude</text><rect x="99.5" y="568" width="448.0" height="2" fill="#8a0e5e" shape-rendering="crispEdges"/><rect x="107.15" y="268.3" width="1.7" height="300.7" fill="#dc128a" opacity="0.9"/><rect x="107.15" y="569" width="1.7" height="86.8" fill="#a8106f"/><g shape-rendering="crispEdges"><line x1="698.66" y1="196.50" x2="698.66" y2="423.50" stroke="#323232" stroke-width="1" stroke-dasharray="2 2"/><line x1="717.45" y1="196.50" x2="717.45" y2="423.50" stroke="#323232" stroke-width="1" stroke-dasharray="2 2"/><line x1="730.78" y1="196.50" x2="730.78" y2="423.50" stroke="#323232" stroke-width="1" stroke-dasharray="2 2"/><line x1="741.12" y1="196.50" x2="741.12" y2="423.50" stroke="#323232" stroke-width="1" stroke-dasharray="2 2"/><line x1="749.57" y1="196.50" x2="749.57" y2="423.50" stroke="#323232" stroke-width="1" stroke-dasharray="2 2"/><line x1="756.72" y1="196.50" x2="756.72" y2="423.50" stroke="#323232" stroke-width="1" stroke-dasharray="2 2"/><line x1="762.91" y1="196.50" x2="762.91" y2="423.50" stroke="#323232" stroke-width="1" stroke-dasharray="2 2"/><line x1="768.37" y1="196.50" x2="768.37" y2="423.50" stroke="#323232" stroke-width="1" stroke-dasharray="2 2"/><line x1="805.38" y1="196.50" x2="805.38" y2="423.50" stroke="#323232" stroke-width="1" stroke-dasharray="2 2"/><line x1="824.17" y1="196.50" x2="824.17" y2="423.50" stroke="#323232" stroke-width="1" stroke-dasharray="2 2"/><line x1="837.50" y1="196.50" x2="837.50" y2="423.50" stroke="#323232" stroke-width="1" stroke-dasharray="2 2"/><line x1="847.84" y1="196.50" x2="847.84" y2="423.50" stroke="#323232" stroke-width="1" stroke-dasharray="2 2"/><line x1="856.29" y1="196.50" x2="856.29" y2="423.50" stroke="#323232" stroke-width="1" stroke-dasharray="2 2"/><line x1="863.44" y1="196.50" x2="863.44" y2="423.50" stroke="#323232" stroke-width="1" stroke-dasharray="2 2"/><line x1="869.63" y1="196.50" x2="869.63" y2="423.50" stroke="#323232" stroke-width="1" stroke-dasharray="2 2"/><line x1="875.09" y1="196.50" x2="875.09" y2="423.50" stroke="#323232" stroke-width="1" stroke-dasharray="2 2"/><line x1="912.10" y1="196.50" x2="912.10" y2="423.50" stroke="#323232" stroke-width="1" stroke-dasharray="2 2"/><line x1="930.89" y1="196.50" x2="930.89" y2="423.50" stroke="#323232" stroke-width="1" stroke-dasharray="2 2"/><line x1="944.22" y1="196.50" x2="944.22" y2="423.50" stroke="#323232" stroke-width="1" stroke-dasharray="2 2"/><line x1="954.56" y1="196.50" x2="954.56" y2="423.50" stroke="#323232" stroke-width="1" stroke-dasharray="2 2"/><line x1="963.01" y1="196.50" x2="963.01" y2="423.50" stroke="#323232" stroke-width="1" stroke-dasharray="2 2"/><line x1="970.16" y1="196.50" x2="970.16" y2="423.50" stroke="#323232" stroke-width="1" stroke-dasharray="2 2"/><line x1="976.35" y1="196.50" x2="976.35" y2="423.50" stroke="#323232" stroke-width="1" stroke-dasharray="2 2"/><line x1="981.81" y1="196.50" x2="981.81" y2="423.50" stroke="#323232" stroke-width="1" stroke-dasharray="2 2"/><line x1="1018.82" y1="196.50" x2="1018.82" y2="423.50" stroke="#323232" stroke-width="1" stroke-dasharray="2 2"/><line x1="1037.61" y1="196.50" x2="1037.61" y2="423.50" stroke="#323232" stroke-width="1" stroke-dasharray="2 2"/><line x1="1050.94" y1="196.50" x2="1050.94" y2="423.50" stroke="#323232" stroke-width="1" stroke-dasharray="2 2"/><line x1="1061.28" y1="196.50" x2="1061.28" y2="423.50" stroke="#323232" stroke-width="1" stroke-dasharray="2 2"/><line x1="1069.73" y1="196.50" x2="1069.73" y2="423.50" stroke="#323232" stroke-width="1" stroke-dasharray="2 2"/><line x1="1076.88" y1="196.50" x2="1076.88" y2="423.50" stroke="#323232" stroke-width="1" stroke-dasharray="2 2"/><line x1="1083.07" y1="196.50" x2="1083.07" y2="423.50" stroke="#323232" stroke-width="1" stroke-dasharray="2 2"/><line x1="1088.53" y1="196.50" x2="1088.53" y2="423.50" stroke="#323232" stroke-width="1" stroke-dasharray="2 2"/><line x1="1125.54" y1="196.50" x2="1125.54" y2="423.50" stroke="#323232" stroke-width="1" stroke-dasharray="2 2"/><line x1="773.25" y1="196.50" x2="773.25" y2="423.50" stroke="#222222" stroke-width="1" /><line x1="879.97" y1="196.50" x2="879.97" y2="423.50" stroke="#222222" stroke-width="1" /><line x1="986.69" y1="196.50" x2="986.69" y2="423.50" stroke="#222222" stroke-width="1" /><line x1="1093.41" y1="196.50" x2="1093.41" y2="423.50" stroke="#222222" stroke-width="1" /><line x1="680.50" y1="213.40" x2="1129.50" y2="213.40" stroke="#222222" stroke-width="1" /><line x1="680.50" y1="249.04" x2="1129.50" y2="249.04" stroke="#222222" stroke-width="1" /><line x1="680.50" y1="284.68" x2="1129.50" y2="284.68" stroke="#222222" stroke-width="1" /><line x1="680.50" y1="320.32" x2="1129.50" y2="320.32" stroke="#222222" stroke-width="1" /><line x1="680.50" y1="355.96" x2="1129.50" y2="355.96" stroke="#222222" stroke-width="1" /><line x1="680.50" y1="391.60" x2="1129.50" y2="391.60" stroke="#222222" stroke-width="1" /></g><g shape-rendering="crispEdges"><line x1="773.25" y1="423.50" x2="773.25" y2="419.00" stroke="#cfcfcf" stroke-width="1" /><line x1="773.25" y1="196.50" x2="773.25" y2="201.00" stroke="#cfcfcf" stroke-width="1" /><line x1="879.97" y1="423.50" x2="879.97" y2="419.00" stroke="#cfcfcf" stroke-width="1" /><line x1="879.97" y1="196.50" x2="879.97" y2="201.00" stroke="#cfcfcf" stroke-width="1" /><line x1="986.69" y1="423.50" x2="986.69" y2="419.00" stroke="#cfcfcf" stroke-width="1" /><line x1="986.69" y1="196.50" x2="986.69" y2="201.00" stroke="#cfcfcf" stroke-width="1" /><line x1="1093.41" y1="423.50" x2="1093.41" y2="419.00" stroke="#cfcfcf" stroke-width="1" /><line x1="1093.41" y1="196.50" x2="1093.41" y2="201.00" stroke="#cfcfcf" stroke-width="1" /><line x1="698.66" y1="423.50" x2="698.66" y2="421.00" stroke="#cfcfcf" stroke-width="1" /><line x1="698.66" y1="196.50" x2="698.66" y2="199.00" stroke="#cfcfcf" stroke-width="1" /><line x1="717.45" y1="423.50" x2="717.45" y2="421.00" stroke="#cfcfcf" stroke-width="1" /><line x1="717.45" y1="196.50" x2="717.45" y2="199.00" stroke="#cfcfcf" stroke-width="1" /><line x1="730.78" y1="423.50" x2="730.78" y2="421.00" stroke="#cfcfcf" stroke-width="1" /><line x1="730.78" y1="196.50" x2="730.78" y2="199.00" stroke="#cfcfcf" stroke-width="1" /><line x1="741.12" y1="423.50" x2="741.12" y2="421.00" stroke="#cfcfcf" stroke-width="1" /><line x1="741.12" y1="196.50" x2="741.12" y2="199.00" stroke="#cfcfcf" stroke-width="1" /><line x1="749.57" y1="423.50" x2="749.57" y2="421.00" stroke="#cfcfcf" stroke-width="1" /><line x1="749.57" y1="196.50" x2="749.57" y2="199.00" stroke="#cfcfcf" stroke-width="1" /><line x1="756.72" y1="423.50" x2="756.72" y2="421.00" stroke="#cfcfcf" stroke-width="1" /><line x1="756.72" y1="196.50" x2="756.72" y2="199.00" stroke="#cfcfcf" stroke-width="1" /><line x1="762.91" y1="423.50" x2="762.91" y2="421.00" stroke="#cfcfcf" stroke-width="1" /><line x1="762.91" y1="196.50" x2="762.91" y2="199.00" stroke="#cfcfcf" stroke-width="1" /><line x1="768.37" y1="423.50" x2="768.37" y2="421.00" stroke="#cfcfcf" stroke-width="1" /><line x1="768.37" y1="196.50" x2="768.37" y2="199.00" stroke="#cfcfcf" stroke-width="1" /><line x1="805.38" y1="423.50" x2="805.38" y2="421.00" stroke="#cfcfcf" stroke-width="1" /><line x1="805.38" y1="196.50" x2="805.38" y2="199.00" stroke="#cfcfcf" stroke-width="1" /><line x1="824.17" y1="423.50" x2="824.17" y2="421.00" stroke="#cfcfcf" stroke-width="1" /><line x1="824.17" y1="196.50" x2="824.17" y2="199.00" stroke="#cfcfcf" stroke-width="1" /><line x1="837.50" y1="423.50" x2="837.50" y2="421.00" stroke="#cfcfcf" stroke-width="1" /><line x1="837.50" y1="196.50" x2="837.50" y2="199.00" stroke="#cfcfcf" stroke-width="1" /><line x1="847.84" y1="423.50" x2="847.84" y2="421.00" stroke="#cfcfcf" stroke-width="1" /><line x1="847.84" y1="196.50" x2="847.84" y2="199.00" stroke="#cfcfcf" stroke-width="1" /><line x1="856.29" y1="423.50" x2="856.29" y2="421.00" stroke="#cfcfcf" stroke-width="1" /><line x1="856.29" y1="196.50" x2="856.29" y2="199.00" stroke="#cfcfcf" stroke-width="1" /><line x1="863.44" y1="423.50" x2="863.44" y2="421.00" stroke="#cfcfcf" stroke-width="1" /><line x1="863.44" y1="196.50" x2="863.44" y2="199.00" stroke="#cfcfcf" stroke-width="1" /><line x1="869.63" y1="423.50" x2="869.63" y2="421.00" stroke="#cfcfcf" stroke-width="1" /><line x1="869.63" y1="196.50" x2="869.63" y2="199.00" stroke="#cfcfcf" stroke-width="1" /><line x1="875.09" y1="423.50" x2="875.09" y2="421.00" stroke="#cfcfcf" stroke-width="1" /><line x1="875.09" y1="196.50" x2="875.09" y2="199.00" stroke="#cfcfcf" stroke-width="1" /><line x1="912.10" y1="423.50" x2="912.10" y2="421.00" stroke="#cfcfcf" stroke-width="1" /><line x1="912.10" y1="196.50" x2="912.10" y2="199.00" stroke="#cfcfcf" stroke-width="1" /><line x1="930.89" y1="423.50" x2="930.89" y2="421.00" stroke="#cfcfcf" stroke-width="1" /><line x1="930.89" y1="196.50" x2="930.89" y2="199.00" stroke="#cfcfcf" stroke-width="1" /><line x1="944.22" y1="423.50" x2="944.22" y2="421.00" stroke="#cfcfcf" stroke-width="1" /><line x1="944.22" y1="196.50" x2="944.22" y2="199.00" stroke="#cfcfcf" stroke-width="1" /><line x1="954.56" y1="423.50" x2="954.56" y2="421.00" stroke="#cfcfcf" stroke-width="1" /><line x1="954.56" y1="196.50" x2="954.56" y2="199.00" stroke="#cfcfcf" stroke-width="1" /><line x1="963.01" y1="423.50" x2="963.01" y2="421.00" stroke="#cfcfcf" stroke-width="1" /><line x1="963.01" y1="196.50" x2="963.01" y2="199.00" stroke="#cfcfcf" stroke-width="1" /><line x1="970.16" y1="423.50" x2="970.16" y2="421.00" stroke="#cfcfcf" stroke-width="1" /><line x1="970.16" y1="196.50" x2="970.16" y2="199.00" stroke="#cfcfcf" stroke-width="1" /><line x1="976.35" y1="423.50" x2="976.35" y2="421.00" stroke="#cfcfcf" stroke-width="1" /><line x1="976.35" y1="196.50" x2="976.35" y2="199.00" stroke="#cfcfcf" stroke-width="1" /><line x1="981.81" y1="423.50" x2="981.81" y2="421.00" stroke="#cfcfcf" stroke-width="1" /><line x1="981.81" y1="196.50" x2="981.81" y2="199.00" stroke="#cfcfcf" stroke-width="1" /><line x1="1018.82" y1="423.50" x2="1018.82" y2="421.00" stroke="#cfcfcf" stroke-width="1" /><line x1="1018.82" y1="196.50" x2="1018.82" y2="199.00" stroke="#cfcfcf" stroke-width="1" /><line x1="1037.61" y1="423.50" x2="1037.61" y2="421.00" stroke="#cfcfcf" stroke-width="1" /><line x1="1037.61" y1="196.50" x2="1037.61" y2="199.00" stroke="#cfcfcf" stroke-width="1" /><line x1="1050.94" y1="423.50" x2="1050.94" y2="421.00" stroke="#cfcfcf" stroke-width="1" /><line x1="1050.94" y1="196.50" x2="1050.94" y2="199.00" stroke="#cfcfcf" stroke-width="1" /><line x1="1061.28" y1="423.50" x2="1061.28" y2="421.00" stroke="#cfcfcf" stroke-width="1" /><line x1="1061.28" y1="196.50" x2="1061.28" y2="199.00" stroke="#cfcfcf" stroke-width="1" /><line x1="1069.73" y1="423.50" x2="1069.73" y2="421.00" stroke="#cfcfcf" stroke-width="1" /><line x1="1069.73" y1="196.50" x2="1069.73" y2="199.00" stroke="#cfcfcf" stroke-width="1" /><line x1="1076.88" y1="423.50" x2="1076.88" y2="421.00" stroke="#cfcfcf" stroke-width="1" /><line x1="1076.88" y1="196.50" x2="1076.88" y2="199.00" stroke="#cfcfcf" stroke-width="1" /><line x1="1083.07" y1="423.50" x2="1083.07" y2="421.00" stroke="#cfcfcf" stroke-width="1" /><line x1="1083.07" y1="196.50" x2="1083.07" y2="199.00" stroke="#cfcfcf" stroke-width="1" /><line x1="1088.53" y1="423.50" x2="1088.53" y2="421.00" stroke="#cfcfcf" stroke-width="1" /><line x1="1088.53" y1="196.50" x2="1088.53" y2="199.00" stroke="#cfcfcf" stroke-width="1" /><line x1="1125.54" y1="423.50" x2="1125.54" y2="421.00" stroke="#cfcfcf" stroke-width="1" /><line x1="1125.54" y1="196.50" x2="1125.54" y2="199.00" stroke="#cfcfcf" stroke-width="1" /><line x1="680.50" y1="213.40" x2="685.00" y2="213.40" stroke="#cfcfcf" stroke-width="1" /><line x1="1129.50" y1="213.40" x2="1125.00" y2="213.40" stroke="#cfcfcf" stroke-width="1" /><line x1="680.50" y1="249.04" x2="685.00" y2="249.04" stroke="#cfcfcf" stroke-width="1" /><line x1="1129.50" y1="249.04" x2="1125.00" y2="249.04" stroke="#cfcfcf" stroke-width="1" /><line x1="680.50" y1="284.68" x2="685.00" y2="284.68" stroke="#cfcfcf" stroke-width="1" /><line x1="1129.50" y1="284.68" x2="1125.00" y2="284.68" stroke="#cfcfcf" stroke-width="1" /><line x1="680.50" y1="320.32" x2="685.00" y2="320.32" stroke="#cfcfcf" stroke-width="1" /><line x1="1129.50" y1="320.32" x2="1125.00" y2="320.32" stroke="#cfcfcf" stroke-width="1" /><line x1="680.50" y1="355.96" x2="685.00" y2="355.96" stroke="#cfcfcf" stroke-width="1" /><line x1="1129.50" y1="355.96" x2="1125.00" y2="355.96" stroke="#cfcfcf" stroke-width="1" /><line x1="680.50" y1="391.60" x2="685.00" y2="391.60" stroke="#cfcfcf" stroke-width="1" /><line x1="1129.50" y1="391.60" x2="1125.00" y2="391.60" stroke="#cfcfcf" stroke-width="1" /><rect x="680.5" y="196.5" width="449.0" height="227.0" fill="none" stroke="#cfcfcf" stroke-width="1"/></g><text x="771.35" y="437.80" text-anchor="middle" font-size="11" >10</text><text x="777.75" y="435.10" text-anchor="start" font-size="9" >1</text><text x="878.07" y="437.80" text-anchor="middle" font-size="11" >10</text><text x="884.47" y="435.10" text-anchor="start" font-size="9" >2</text><text x="984.79" y="437.80" text-anchor="middle" font-size="11" >10</text><text x="991.19" y="435.10" text-anchor="start" font-size="9" >3</text><text x="1091.51" y="437.80" text-anchor="middle" font-size="11" >10</text><text x="1097.91" y="435.10" text-anchor="start" font-size="9" >4</text><text x="676.20" y="217.30" text-anchor="end" font-size="11" >-10</text><text x="676.20" y="252.94" text-anchor="end" font-size="11" >-15</text><text x="676.20" y="288.58" text-anchor="end" font-size="11" >-20</text><text x="676.20" y="324.22" text-anchor="end" font-size="11" >-25</text><text x="676.20" y="359.86" text-anchor="end" font-size="11" >-30</text><text x="676.20" y="395.50" text-anchor="end" font-size="11" >-35</text><text x="905.10" y="455.50" text-anchor="middle" font-size="12.5" >Frequency (Hz)</text><text transform="translate(654.8,310.0) rotate(-90)" text-anchor="middle" font-size="12.3">Magnitude (dB)</text><path d="M680.5 350.8 L689.6 331.0 L698.7 312.9 L712.3 284.5 L721.4 269.8 L730.5 256.1 L739.6 244.8 L748.6 235.0 L757.7 227.8 L766.8 222.6 L773.6 220.7 L780.4 220.1 L787.2 220.5 L794.0 221.2 L800.8 220.5 L807.6 219.5 L814.4 219.5 L821.3 220.1 L830.3 219.3 L839.4 219.6 L846.2 219.1 L856.0 219.2 L900.0 219.2 L1000.0 219.3 L1110.0 219.4 L1126.5 219.6 L1128.0 221.0 L1129.0 224.5 L1129.6 232.0 L1129.7 377.0" stroke="#e0128c" stroke-width="1.15" fill="none" stroke-linejoin="round"/><g shape-rendering="crispEdges"><line x1="698.66" y1="505.50" x2="698.66" y2="734.50" stroke="#323232" stroke-width="1" stroke-dasharray="2 2"/><line x1="717.45" y1="505.50" x2="717.45" y2="734.50" stroke="#323232" stroke-width="1" stroke-dasharray="2 2"/><line x1="730.78" y1="505.50" x2="730.78" y2="734.50" stroke="#323232" stroke-width="1" stroke-dasharray="2 2"/><line x1="741.12" y1="505.50" x2="741.12" y2="734.50" stroke="#323232" stroke-width="1" stroke-dasharray="2 2"/><line x1="749.57" y1="505.50" x2="749.57" y2="734.50" stroke="#323232" stroke-width="1" stroke-dasharray="2 2"/><line x1="756.72" y1="505.50" x2="756.72" y2="734.50" stroke="#323232" stroke-width="1" stroke-dasharray="2 2"/><line x1="762.91" y1="505.50" x2="762.91" y2="734.50" stroke="#323232" stroke-width="1" stroke-dasharray="2 2"/><line x1="768.37" y1="505.50" x2="768.37" y2="734.50" stroke="#323232" stroke-width="1" stroke-dasharray="2 2"/><line x1="805.38" y1="505.50" x2="805.38" y2="734.50" stroke="#323232" stroke-width="1" stroke-dasharray="2 2"/><line x1="824.17" y1="505.50" x2="824.17" y2="734.50" stroke="#323232" stroke-width="1" stroke-dasharray="2 2"/><line x1="837.50" y1="505.50" x2="837.50" y2="734.50" stroke="#323232" stroke-width="1" stroke-dasharray="2 2"/><line x1="847.84" y1="505.50" x2="847.84" y2="734.50" stroke="#323232" stroke-width="1" stroke-dasharray="2 2"/><line x1="856.29" y1="505.50" x2="856.29" y2="734.50" stroke="#323232" stroke-width="1" stroke-dasharray="2 2"/><line x1="863.44" y1="505.50" x2="863.44" y2="734.50" stroke="#323232" stroke-width="1" stroke-dasharray="2 2"/><line x1="869.63" y1="505.50" x2="869.63" y2="734.50" stroke="#323232" stroke-width="1" stroke-dasharray="2 2"/><line x1="875.09" y1="505.50" x2="875.09" y2="734.50" stroke="#323232" stroke-width="1" stroke-dasharray="2 2"/><line x1="912.10" y1="505.50" x2="912.10" y2="734.50" stroke="#323232" stroke-width="1" stroke-dasharray="2 2"/><line x1="930.89" y1="505.50" x2="930.89" y2="734.50" stroke="#323232" stroke-width="1" stroke-dasharray="2 2"/><line x1="944.22" y1="505.50" x2="944.22" y2="734.50" stroke="#323232" stroke-width="1" stroke-dasharray="2 2"/><line x1="954.56" y1="505.50" x2="954.56" y2="734.50" stroke="#323232" stroke-width="1" stroke-dasharray="2 2"/><line x1="963.01" y1="505.50" x2="963.01" y2="734.50" stroke="#323232" stroke-width="1" stroke-dasharray="2 2"/><line x1="970.16" y1="505.50" x2="970.16" y2="734.50" stroke="#323232" stroke-width="1" stroke-dasharray="2 2"/><line x1="976.35" y1="505.50" x2="976.35" y2="734.50" stroke="#323232" stroke-width="1" stroke-dasharray="2 2"/><line x1="981.81" y1="505.50" x2="981.81" y2="734.50" stroke="#323232" stroke-width="1" stroke-dasharray="2 2"/><line x1="1018.82" y1="505.50" x2="1018.82" y2="734.50" stroke="#323232" stroke-width="1" stroke-dasharray="2 2"/><line x1="1037.61" y1="505.50" x2="1037.61" y2="734.50" stroke="#323232" stroke-width="1" stroke-dasharray="2 2"/><line x1="1050.94" y1="505.50" x2="1050.94" y2="734.50" stroke="#323232" stroke-width="1" stroke-dasharray="2 2"/><line x1="1061.28" y1="505.50" x2="1061.28" y2="734.50" stroke="#323232" stroke-width="1" stroke-dasharray="2 2"/><line x1="1069.73" y1="505.50" x2="1069.73" y2="734.50" stroke="#323232" stroke-width="1" stroke-dasharray="2 2"/><line x1="1076.88" y1="505.50" x2="1076.88" y2="734.50" stroke="#323232" stroke-width="1" stroke-dasharray="2 2"/><line x1="1083.07" y1="505.50" x2="1083.07" y2="734.50" stroke="#323232" stroke-width="1" stroke-dasharray="2 2"/><line x1="1088.53" y1="505.50" x2="1088.53" y2="734.50" stroke="#323232" stroke-width="1" stroke-dasharray="2 2"/><line x1="1125.54" y1="505.50" x2="1125.54" y2="734.50" stroke="#323232" stroke-width="1" stroke-dasharray="2 2"/><line x1="773.25" y1="505.50" x2="773.25" y2="734.50" stroke="#222222" stroke-width="1" /><line x1="879.97" y1="505.50" x2="879.97" y2="734.50" stroke="#222222" stroke-width="1" /><line x1="986.69" y1="505.50" x2="986.69" y2="734.50" stroke="#222222" stroke-width="1" /><line x1="1093.41" y1="505.50" x2="1093.41" y2="734.50" stroke="#222222" stroke-width="1" /><line x1="680.50" y1="527.90" x2="1129.50" y2="527.90" stroke="#222222" stroke-width="1" /><line x1="680.50" y1="561.45" x2="1129.50" y2="561.45" stroke="#222222" stroke-width="1" /><line x1="680.50" y1="595.00" x2="1129.50" y2="595.00" stroke="#222222" stroke-width="1" /><line x1="680.50" y1="628.55" x2="1129.50" y2="628.55" stroke="#222222" stroke-width="1" /><line x1="680.50" y1="662.10" x2="1129.50" y2="662.10" stroke="#222222" stroke-width="1" /><line x1="680.50" y1="695.65" x2="1129.50" y2="695.65" stroke="#222222" stroke-width="1" /><line x1="680.50" y1="729.20" x2="1129.50" y2="729.20" stroke="#222222" stroke-width="1" /></g><g shape-rendering="crispEdges"><line x1="773.25" y1="734.50" x2="773.25" y2="730.00" stroke="#cfcfcf" stroke-width="1" /><line x1="773.25" y1="505.50" x2="773.25" y2="510.00" stroke="#cfcfcf" stroke-width="1" /><line x1="879.97" y1="734.50" x2="879.97" y2="730.00" stroke="#cfcfcf" stroke-width="1" /><line x1="879.97" y1="505.50" x2="879.97" y2="510.00" stroke="#cfcfcf" stroke-width="1" /><line x1="986.69" y1="734.50" x2="986.69" y2="730.00" stroke="#cfcfcf" stroke-width="1" /><line x1="986.69" y1="505.50" x2="986.69" y2="510.00" stroke="#cfcfcf" stroke-width="1" /><line x1="1093.41" y1="734.50" x2="1093.41" y2="730.00" stroke="#cfcfcf" stroke-width="1" /><line x1="1093.41" y1="505.50" x2="1093.41" y2="510.00" stroke="#cfcfcf" stroke-width="1" /><line x1="698.66" y1="734.50" x2="698.66" y2="732.00" stroke="#cfcfcf" stroke-width="1" /><line x1="698.66" y1="505.50" x2="698.66" y2="508.00" stroke="#cfcfcf" stroke-width="1" /><line x1="717.45" y1="734.50" x2="717.45" y2="732.00" stroke="#cfcfcf" stroke-width="1" /><line x1="717.45" y1="505.50" x2="717.45" y2="508.00" stroke="#cfcfcf" stroke-width="1" /><line x1="730.78" y1="734.50" x2="730.78" y2="732.00" stroke="#cfcfcf" stroke-width="1" /><line x1="730.78" y1="505.50" x2="730.78" y2="508.00" stroke="#cfcfcf" stroke-width="1" /><line x1="741.12" y1="734.50" x2="741.12" y2="732.00" stroke="#cfcfcf" stroke-width="1" /><line x1="741.12" y1="505.50" x2="741.12" y2="508.00" stroke="#cfcfcf" stroke-width="1" /><line x1="749.57" y1="734.50" x2="749.57" y2="732.00" stroke="#cfcfcf" stroke-width="1" /><line x1="749.57" y1="505.50" x2="749.57" y2="508.00" stroke="#cfcfcf" stroke-width="1" /><line x1="756.72" y1="734.50" x2="756.72" y2="732.00" stroke="#cfcfcf" stroke-width="1" /><line x1="756.72" y1="505.50" x2="756.72" y2="508.00" stroke="#cfcfcf" stroke-width="1" /><line x1="762.91" y1="734.50" x2="762.91" y2="732.00" stroke="#cfcfcf" stroke-width="1" /><line x1="762.91" y1="505.50" x2="762.91" y2="508.00" stroke="#cfcfcf" stroke-width="1" /><line x1="768.37" y1="734.50" x2="768.37" y2="732.00" stroke="#cfcfcf" stroke-width="1" /><line x1="768.37" y1="505.50" x2="768.37" y2="508.00" stroke="#cfcfcf" stroke-width="1" /><line x1="805.38" y1="734.50" x2="805.38" y2="732.00" stroke="#cfcfcf" stroke-width="1" /><line x1="805.38" y1="505.50" x2="805.38" y2="508.00" stroke="#cfcfcf" stroke-width="1" /><line x1="824.17" y1="734.50" x2="824.17" y2="732.00" stroke="#cfcfcf" stroke-width="1" /><line x1="824.17" y1="505.50" x2="824.17" y2="508.00" stroke="#cfcfcf" stroke-width="1" /><line x1="837.50" y1="734.50" x2="837.50" y2="732.00" stroke="#cfcfcf" stroke-width="1" /><line x1="837.50" y1="505.50" x2="837.50" y2="508.00" stroke="#cfcfcf" stroke-width="1" /><line x1="847.84" y1="734.50" x2="847.84" y2="732.00" stroke="#cfcfcf" stroke-width="1" /><line x1="847.84" y1="505.50" x2="847.84" y2="508.00" stroke="#cfcfcf" stroke-width="1" /><line x1="856.29" y1="734.50" x2="856.29" y2="732.00" stroke="#cfcfcf" stroke-width="1" /><line x1="856.29" y1="505.50" x2="856.29" y2="508.00" stroke="#cfcfcf" stroke-width="1" /><line x1="863.44" y1="734.50" x2="863.44" y2="732.00" stroke="#cfcfcf" stroke-width="1" /><line x1="863.44" y1="505.50" x2="863.44" y2="508.00" stroke="#cfcfcf" stroke-width="1" /><line x1="869.63" y1="734.50" x2="869.63" y2="732.00" stroke="#cfcfcf" stroke-width="1" /><line x1="869.63" y1="505.50" x2="869.63" y2="508.00" stroke="#cfcfcf" stroke-width="1" /><line x1="875.09" y1="734.50" x2="875.09" y2="732.00" stroke="#cfcfcf" stroke-width="1" /><line x1="875.09" y1="505.50" x2="875.09" y2="508.00" stroke="#cfcfcf" stroke-width="1" /><line x1="912.10" y1="734.50" x2="912.10" y2="732.00" stroke="#cfcfcf" stroke-width="1" /><line x1="912.10" y1="505.50" x2="912.10" y2="508.00" stroke="#cfcfcf" stroke-width="1" /><line x1="930.89" y1="734.50" x2="930.89" y2="732.00" stroke="#cfcfcf" stroke-width="1" /><line x1="930.89" y1="505.50" x2="930.89" y2="508.00" stroke="#cfcfcf" stroke-width="1" /><line x1="944.22" y1="734.50" x2="944.22" y2="732.00" stroke="#cfcfcf" stroke-width="1" /><line x1="944.22" y1="505.50" x2="944.22" y2="508.00" stroke="#cfcfcf" stroke-width="1" /><line x1="954.56" y1="734.50" x2="954.56" y2="732.00" stroke="#cfcfcf" stroke-width="1" /><line x1="954.56" y1="505.50" x2="954.56" y2="508.00" stroke="#cfcfcf" stroke-width="1" /><line x1="963.01" y1="734.50" x2="963.01" y2="732.00" stroke="#cfcfcf" stroke-width="1" /><line x1="963.01" y1="505.50" x2="963.01" y2="508.00" stroke="#cfcfcf" stroke-width="1" /><line x1="970.16" y1="734.50" x2="970.16" y2="732.00" stroke="#cfcfcf" stroke-width="1" /><line x1="970.16" y1="505.50" x2="970.16" y2="508.00" stroke="#cfcfcf" stroke-width="1" /><line x1="976.35" y1="734.50" x2="976.35" y2="732.00" stroke="#cfcfcf" stroke-width="1" /><line x1="976.35" y1="505.50" x2="976.35" y2="508.00" stroke="#cfcfcf" stroke-width="1" /><line x1="981.81" y1="734.50" x2="981.81" y2="732.00" stroke="#cfcfcf" stroke-width="1" /><line x1="981.81" y1="505.50" x2="981.81" y2="508.00" stroke="#cfcfcf" stroke-width="1" /><line x1="1018.82" y1="734.50" x2="1018.82" y2="732.00" stroke="#cfcfcf" stroke-width="1" /><line x1="1018.82" y1="505.50" x2="1018.82" y2="508.00" stroke="#cfcfcf" stroke-width="1" /><line x1="1037.61" y1="734.50" x2="1037.61" y2="732.00" stroke="#cfcfcf" stroke-width="1" /><line x1="1037.61" y1="505.50" x2="1037.61" y2="508.00" stroke="#cfcfcf" stroke-width="1" /><line x1="1050.94" y1="734.50" x2="1050.94" y2="732.00" stroke="#cfcfcf" stroke-width="1" /><line x1="1050.94" y1="505.50" x2="1050.94" y2="508.00" stroke="#cfcfcf" stroke-width="1" /><line x1="1061.28" y1="734.50" x2="1061.28" y2="732.00" stroke="#cfcfcf" stroke-width="1" /><line x1="1061.28" y1="505.50" x2="1061.28" y2="508.00" stroke="#cfcfcf" stroke-width="1" /><line x1="1069.73" y1="734.50" x2="1069.73" y2="732.00" stroke="#cfcfcf" stroke-width="1" /><line x1="1069.73" y1="505.50" x2="1069.73" y2="508.00" stroke="#cfcfcf" stroke-width="1" /><line x1="1076.88" y1="734.50" x2="1076.88" y2="732.00" stroke="#cfcfcf" stroke-width="1" /><line x1="1076.88" y1="505.50" x2="1076.88" y2="508.00" stroke="#cfcfcf" stroke-width="1" /><line x1="1083.07" y1="734.50" x2="1083.07" y2="732.00" stroke="#cfcfcf" stroke-width="1" /><line x1="1083.07" y1="505.50" x2="1083.07" y2="508.00" stroke="#cfcfcf" stroke-width="1" /><line x1="1088.53" y1="734.50" x2="1088.53" y2="732.00" stroke="#cfcfcf" stroke-width="1" /><line x1="1088.53" y1="505.50" x2="1088.53" y2="508.00" stroke="#cfcfcf" stroke-width="1" /><line x1="1125.54" y1="734.50" x2="1125.54" y2="732.00" stroke="#cfcfcf" stroke-width="1" /><line x1="1125.54" y1="505.50" x2="1125.54" y2="508.00" stroke="#cfcfcf" stroke-width="1" /><line x1="680.50" y1="527.90" x2="685.00" y2="527.90" stroke="#cfcfcf" stroke-width="1" /><line x1="1129.50" y1="527.90" x2="1125.00" y2="527.90" stroke="#cfcfcf" stroke-width="1" /><line x1="680.50" y1="561.45" x2="685.00" y2="561.45" stroke="#cfcfcf" stroke-width="1" /><line x1="1129.50" y1="561.45" x2="1125.00" y2="561.45" stroke="#cfcfcf" stroke-width="1" /><line x1="680.50" y1="595.00" x2="685.00" y2="595.00" stroke="#cfcfcf" stroke-width="1" /><line x1="1129.50" y1="595.00" x2="1125.00" y2="595.00" stroke="#cfcfcf" stroke-width="1" /><line x1="680.50" y1="628.55" x2="685.00" y2="628.55" stroke="#cfcfcf" stroke-width="1" /><line x1="1129.50" y1="628.55" x2="1125.00" y2="628.55" stroke="#cfcfcf" stroke-width="1" /><line x1="680.50" y1="662.10" x2="685.00" y2="662.10" stroke="#cfcfcf" stroke-width="1" /><line x1="1129.50" y1="662.10" x2="1125.00" y2="662.10" stroke="#cfcfcf" stroke-width="1" /><line x1="680.50" y1="695.65" x2="685.00" y2="695.65" stroke="#cfcfcf" stroke-width="1" /><line x1="1129.50" y1="695.65" x2="1125.00" y2="695.65" stroke="#cfcfcf" stroke-width="1" /><line x1="680.50" y1="729.20" x2="685.00" y2="729.20" stroke="#cfcfcf" stroke-width="1" /><line x1="1129.50" y1="729.20" x2="1125.00" y2="729.20" stroke="#cfcfcf" stroke-width="1" /><rect x="680.5" y="505.5" width="449.0" height="229.0" fill="none" stroke="#cfcfcf" stroke-width="1"/></g><text x="771.35" y="748.80" text-anchor="middle" font-size="11" >10</text><text x="777.75" y="746.10" text-anchor="start" font-size="9" >1</text><text x="878.07" y="748.80" text-anchor="middle" font-size="11" >10</text><text x="884.47" y="746.10" text-anchor="start" font-size="9" >2</text><text x="984.79" y="748.80" text-anchor="middle" font-size="11" >10</text><text x="991.19" y="746.10" text-anchor="start" font-size="9" >3</text><text x="1091.51" y="748.80" text-anchor="middle" font-size="11" >10</text><text x="1097.91" y="746.10" text-anchor="start" font-size="9" >4</text><text x="676.20" y="531.80" text-anchor="end" font-size="11" >0</text><text x="676.20" y="565.35" text-anchor="end" font-size="11" >-2000</text><text x="676.20" y="598.90" text-anchor="end" font-size="11" >-4000</text><text x="676.20" y="632.45" text-anchor="end" font-size="11" >-6000</text><text x="676.20" y="666.00" text-anchor="end" font-size="11" >-8000</text><text x="676.20" y="699.55" text-anchor="end" font-size="11" >-10000</text><text x="676.20" y="733.10" text-anchor="end" font-size="11" >-12000</text><text x="905.10" y="765.90" text-anchor="middle" font-size="12.5" >Frequency (Hz)</text><text transform="translate(635.3,620.0) rotate(-90)" text-anchor="middle" font-size="12.3">Phase (radians)</text><path d="M680.3 527.9 L683.1 527.9 L685.9 527.9 L688.7 527.9 L691.5 527.9 L694.3 527.9 L697.2 527.9 L700.0 527.9 L702.8 527.9 L705.6 527.9 L708.4 527.9 L711.2 527.9 L714.0 527.9 L716.8 527.9 L719.6 527.9 L722.5 527.9 L725.3 527.9 L728.1 527.9 L730.9 527.9 L733.7 527.9 L736.5 527.9 L739.3 527.9 L742.1 527.9 L744.9 527.9 L747.8 527.9 L750.6 528.0 L753.4 528.0 L756.2 528.0 L759.0 528.0 L761.8 528.0 L764.6 528.0 L767.4 528.0 L770.2 528.0 L773.1 528.0 L775.9 528.0 L778.7 528.0 L781.5 528.0 L784.3 528.0 L787.1 528.0 L789.9 528.0 L792.7 528.0 L795.5 528.0 L798.4 528.0 L801.2 528.1 L804.0 528.1 L806.8 528.1 L809.6 528.1 L812.4 528.1 L815.2 528.1 L818.0 528.1 L820.8 528.1 L823.7 528.1 L826.5 528.2 L829.3 528.2 L832.1 528.2 L834.9 528.2 L837.7 528.2 L840.5 528.3 L843.3 528.3 L846.1 528.3 L849.0 528.3 L851.8 528.4 L854.6 528.4 L857.4 528.4 L860.2 528.4 L863.0 528.5 L865.8 528.5 L868.6 528.6 L871.4 528.6 L874.3 528.6 L877.1 528.7 L879.9 528.7 L882.7 528.8 L885.5 528.8 L888.3 528.9 L891.1 529.0 L893.9 529.0 L896.7 529.1 L899.6 529.2 L902.4 529.2 L905.2 529.3 L908.0 529.4 L910.8 529.5 L913.6 529.6 L916.4 529.7 L919.2 529.8 L922.0 530.0 L924.9 530.1 L927.7 530.2 L930.5 530.4 L933.3 530.5 L936.1 530.7 L938.9 530.9 L941.7 531.1 L944.5 531.2 L947.3 531.5 L950.2 531.7 L953.0 531.9 L955.8 532.2 L958.6 532.4 L961.4 532.7 L964.2 533.0 L967.0 533.3 L969.8 533.7 L972.6 534.0 L975.5 534.4 L978.3 534.8 L981.1 535.3 L983.9 535.7 L986.7 536.2 L989.5 536.7 L992.3 537.3 L995.1 537.9 L997.9 538.5 L1000.8 539.2 L1003.6 539.9 L1006.4 540.6 L1009.2 541.4 L1012.0 542.3 L1014.8 543.2 L1017.6 544.1 L1020.4 545.1 L1023.2 546.2 L1026.1 547.3 L1028.9 548.6 L1031.7 549.8 L1034.5 551.2 L1037.3 552.7 L1040.1 554.2 L1042.9 555.9 L1045.7 557.6 L1048.5 559.5 L1051.3 561.5 L1054.2 563.6 L1057.0 565.8 L1059.8 568.2 L1062.6 570.7 L1065.4 573.3 L1068.2 576.2 L1071.0 579.2 L1073.8 582.4 L1076.6 585.8 L1079.5 589.4 L1082.3 593.3 L1085.1 597.4 L1087.9 601.7 L1090.7 606.3 L1093.5 611.3 L1096.3 616.5 L1099.1 622.0 L1101.9 627.9 L1104.8 634.1 L1107.6 640.8 L1110.4 647.8 L1113.2 655.3 L1116.0 663.3 L1118.8 671.8 L1121.6 680.8 L1124.4 690.3 L1127.2 700.5 L1130.1 711.3" stroke="#e0128c" stroke-width="1.15" fill="none" stroke-linejoin="round"/></svg>
<div style="position:absolute;left:604px;top:459px;width:581px;height:1px;background:#a0a0a0;"></div>
<div style="position:absolute;left:0px;top:0px;width:1px;height:793px;background:#4a4a4a;"></div>
<div style="position:absolute;left:1185px;top:0px;width:1px;height:793px;background:#4a4a4a;"></div>
<div style="position:absolute;left:0px;top:792px;width:1186px;height:1px;background:#6a6a6a;"></div>
</body></html>
